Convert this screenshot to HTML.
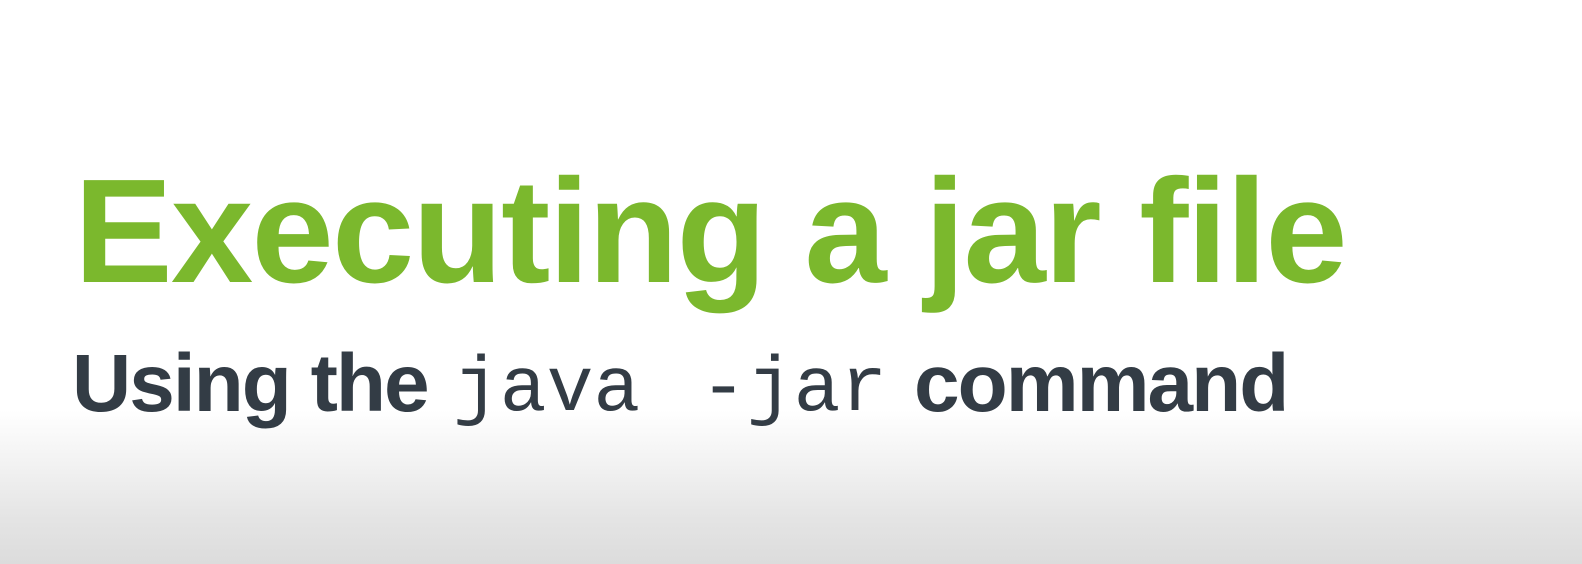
<!DOCTYPE html>
<html><head><style>
html,body{margin:0;padding:0}
body{width:1582px;height:564px;position:relative;overflow:hidden;
background:linear-gradient(to bottom,#fff 0px,#fff 410px,#f3f3f3 460px,#e4e4e4 520px,#dcdcdc 564px);
font-family:"Liberation Sans",sans-serif}
.t{position:absolute;white-space:nowrap;line-height:1}
#title{left:74px;top:158px;font-size:148px;font-weight:bold;color:#7bb82d;letter-spacing:-1.8px}
.s{font-size:82px;font-weight:bold;color:#333c45;top:343px;letter-spacing:-2px}
.m{font-family:"Liberation Mono",monospace;font-size:78px;color:#333c45;top:351px}
</style></head><body>
<div class="t" id="title">Executing a jar file</div>
<div class="t s" style="left:72px">Using the</div>
<div class="t m" style="left:453px">java</div>
<div class="t m" style="left:700px">-jar</div>
<div class="t s" style="left:914px">command</div>
</body></html>
